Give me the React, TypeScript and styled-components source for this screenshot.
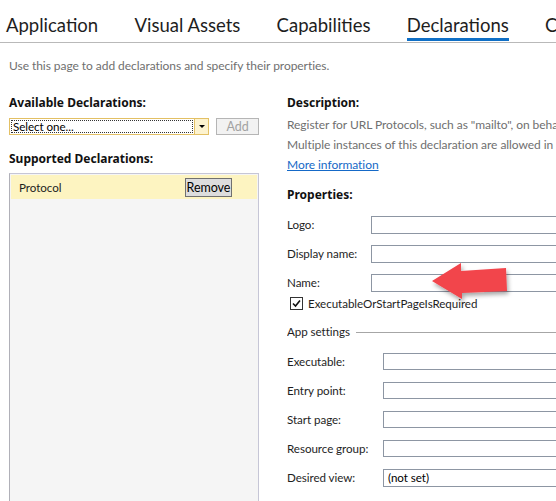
import React from "react";
import styled, { createGlobalStyle } from "styled-components";

const GlobalStyle = createGlobalStyle`
  html, body { margin: 0; padding: 0; background: #fff; }
  body {
    width: 556px; height: 501px; overflow: hidden;
    font-family: "Segoe UI", Lato, "Noto Sans", sans-serif;
    font-size: 11.6px; letter-spacing: -0.05px; color: #1e1e1e;
  }
`;

const Page = styled.div`
  position: relative;
  width: 556px;
  height: 501px;
  overflow: hidden;
  background: #fff;
`;

const TabBar = styled.div`
  display: flex;
  gap: 36.3px;
  padding-left: 6px;
  height: 42px;
  border-bottom: 1px solid #b9b9b9;
  white-space: nowrap;
  overflow: hidden;
`;

const Tab = styled.div<{ $active?: boolean }>`
  box-sizing: border-box;
  height: 41px;
  padding-top: 14px;
  font-size: 18.5px;
  line-height: 22px;
  letter-spacing: 0;
  color: #1e1e1e;
  border-bottom: 3px solid ${(p) => (p.$active ? "#0f6fc6" : "transparent")};
`;

const Intro = styled.div`
  margin-top: 15px;
  padding-left: 9px;
  line-height: 16px;
  color: #6f6f6f;
  white-space: nowrap;
  font-size: 12px;
`;

const Main = styled.div`
  display: grid;
  grid-template-columns: 250px minmax(0, 1fr);
  column-gap: 28px;
  margin-top: 21px;
  padding-left: 9px;
`;

const LeftCol = styled.div`
  display: flex;
  flex-direction: column;
`;

const RightCol = styled.div`
  display: flex;
  flex-direction: column;
  overflow: hidden;
  white-space: nowrap;
`;

const Heading = styled.div<{ $mt?: number }>`
  font-family: "Noto Sans", "Open Sans", sans-serif;
  font-weight: 700;
  font-size: 12px;
  letter-spacing: 0;
  line-height: 16px;
  margin-top: ${(p) => p.$mt ?? 0}px;
  color: #111;
`;

const ComboRow = styled.div`
  display: flex;
  align-items: stretch;
  margin-top: 7px;
  height: 17px;
`;

const Combo = styled.div`
  box-sizing: border-box;
  display: flex;
  width: 200px;
  border: 1px solid #e3c064;
  background: #fff;
`;

const ComboText = styled.div`
  box-sizing: border-box;
  flex: 1;
  margin: 1px;
  border: 1px dotted #333;
  display: flex;
  align-items: center;
  padding-left: 1px;
  color: #000;
`;

const ComboArrow = styled.div`
  width: 13px;
  border-left: 1px solid #e3c064;
  background: #fdf3cf;
  display: flex;
  align-items: center;
  justify-content: center;
  &::after {
    content: "";
    border-left: 3px solid transparent;
    border-right: 3px solid transparent;
    border-top: 3px solid #000;
  }
`;

const Button = styled.div<{ $disabled?: boolean }>`
  box-sizing: border-box;
  display: flex;
  align-items: center;
  justify-content: center;
  border: 1px solid ${(p) => (p.$disabled ? "#b5b5b5" : "#707070")};
  background: ${(p) => (p.$disabled ? "#f2f2f2" : "#dddddd")};
  color: ${(p) => (p.$disabled ? "#a2a2a2" : "#000")};
`;

const AddButton = styled(Button)`
  margin-left: 7px;
  width: 43px;
  font-size: 12.5px;
`;

const List = styled.div`
  box-sizing: border-box;
  margin-top: 6px;
  height: 340px;
  border: 1px solid #c6c6d6;
  border-left-color: #b0b0b8;
  background: #f5f5f5;
  padding: 1px;
`;

const ListItem = styled.div<{ $selected?: boolean }>`
  display: flex;
  align-items: center;
  justify-content: space-between;
  height: 24px;
  padding-left: 8px;
  padding-right: 25px;
  background: ${(p) => (p.$selected ? "#fdf4c1" : "transparent")};
  color: #1e1e1e;
`;

const RemoveButton = styled(Button)`
  width: 47px;
  height: 19px;
  font-size: 12.5px;
`;

const DescLine = styled.div<{ $first?: boolean }>`
  line-height: 20px;
  font-size: 12px;
  color: #6f6f6f;
  margin-top: ${(p) => (p.$first ? 4 : 0)}px;
`;

const Link = styled.a`
  line-height: 20px;
  font-size: 12px;
  color: #1569c7;
  text-decoration: underline;
  cursor: pointer;
`;

const PropGroup = styled.div<{ $mt: number }>`
  display: flex;
  flex-direction: column;
  margin-top: ${(p) => p.$mt}px;
`;

const PropRow = styled.div<{ $labelWidth: number }>`
  display: grid;
  grid-template-columns: ${(p) => p.$labelWidth}px 1fr;
  align-items: center;
  height: 29px;
`;

const Label = styled.div`
  color: #1e1e1e;
`;

const Input = styled.div<{ $h: number }>`
  box-sizing: border-box;
  height: ${(p) => p.$h}px;
  margin-right: -20px;
  border: 1px solid #8d96a3;
  background: #fff;
  padding-left: 4px;
  line-height: ${(p) => p.$h - 2}px;
  color: #000;
`;

const CheckRow = styled.div`
  display: flex;
  align-items: center;
  height: 13px;
  padding-left: 3px;
  gap: 5px;
`;

const CheckBox = styled.div`
  box-sizing: border-box;
  width: 13px;
  height: 13px;
  border: 1px solid #333;
  background: #fff;
  display: flex;
  align-items: center;
  justify-content: center;
`;

const SectionTitle = styled.div`
  display: flex;
  align-items: center;
  margin-top: 14px;
  line-height: 16px;
  color: #1e1e1e;
  &::after {
    content: "";
    flex: 1;
    height: 1px;
    background: #a6a6a6;
    margin-left: 6px;
  }
`;

const ArrowOverlay = styled.svg`
  position: absolute;
  left: 420px;
  top: 252px;
  width: 100px;
  height: 60px;
  pointer-events: none;
`;

const tabs = ["Application", "Visual Assets", "Capabilities", "Declarations", "Content URIs", "Packaging"];

const propsTop = ["Logo:", "Display name:", "Name:"];
const propsApp: { label: string; value?: string; h: number }[] = [
  { label: "Executable:", h: 17 },
  { label: "Entry point:", h: 17 },
  { label: "Start page:", h: 17 },
  { label: "Resource group:", h: 17 },
  { label: "Desired view:", value: "(not set)", h: 18 },
];

export default function App() {
  return (
    <Page>
      <GlobalStyle />
      <TabBar>
        {tabs.map((t) => (
          <Tab key={t} $active={t === "Declarations"}>
            {t}
          </Tab>
        ))}
      </TabBar>
      <Intro>Use this page to add declarations and specify their properties.</Intro>
      <Main>
        <LeftCol>
          <Heading>Available Declarations:</Heading>
          <ComboRow>
            <Combo>
              <ComboText>Select one...</ComboText>
              <ComboArrow />
            </Combo>
            <AddButton $disabled>Add</AddButton>
          </ComboRow>
          <Heading $mt={16}>Supported Declarations:</Heading>
          <List>
            <ListItem $selected>
              <span>Protocol</span>
              <RemoveButton>Remove</RemoveButton>
            </ListItem>
          </List>
        </LeftCol>
        <RightCol>
          <Heading>Description:</Heading>
          <DescLine $first>Register for URL Protocols, such as "mailto", on behalf of the app.</DescLine>
          <DescLine>Multiple instances of this declaration are allowed in each app.</DescLine>
          <div>
            <Link>More information</Link>
          </div>
          <Heading $mt={12}>Properties:</Heading>
          <PropGroup $mt={7}>
            {propsTop.map((l) => (
              <PropRow key={l} $labelWidth={84}>
                <Label>{l}</Label>
                <Input $h={18} />
              </PropRow>
            ))}
          </PropGroup>
          <CheckRow>
            <CheckBox>
              <svg width="9" height="9" viewBox="0 0 9 9">
                <path d="M1 4.5 L3.5 7 L8 1.5" fill="none" stroke="#111" strokeWidth="1.6" />
              </svg>
            </CheckBox>
            <span>ExecutableOrStartPageIsRequired</span>
          </CheckRow>
          <SectionTitle>App settings</SectionTitle>
          <PropGroup $mt={7}>
            {propsApp.map((p) => (
              <PropRow key={p.label} $labelWidth={96}>
                <Label>{p.label}</Label>
                <Input $h={p.h}>{p.value}</Input>
              </PropRow>
            ))}
          </PropGroup>
        </RightCol>
      </Main>
      <ArrowOverlay viewBox="0 0 100 60">
        <defs>
          <filter id="sh" x="-20%" y="-30%" width="150%" height="170%">
            <feDropShadow dx="1.5" dy="3" stdDeviation="2" floodColor="#000" floodOpacity="0.35" />
          </filter>
        </defs>
        <path
          d="M12 29 L41 11 L41 19 L86 16 L87 39 L42 41 L42 47 Z"
          fill="#f2444b"
          filter="url(#sh)"
        />
      </ArrowOverlay>
    </Page>
  );
}
